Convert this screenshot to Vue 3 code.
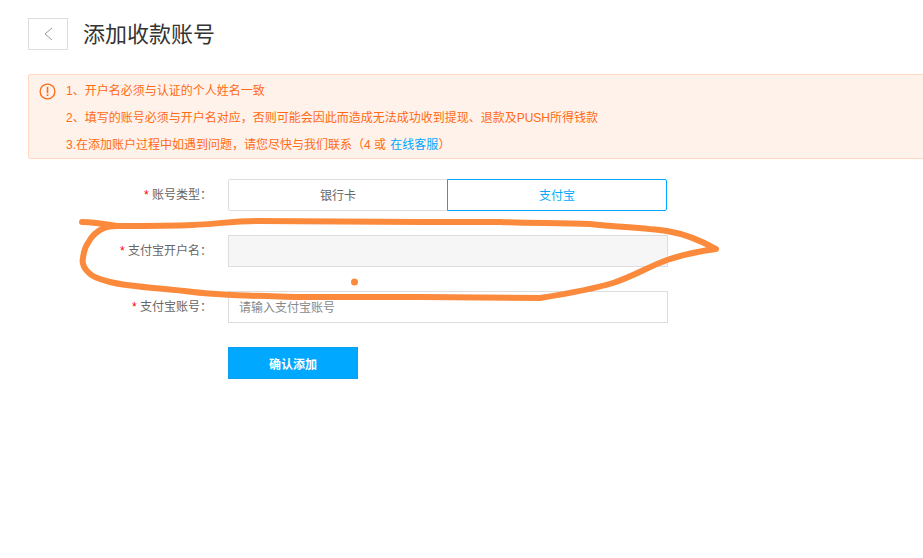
<script setup>
import { ref } from 'vue';

const accountType = ref('alipay');
const types = [
  { key: 'bank', label: '银行卡' },
  { key: 'alipay', label: '支付宝' }
];
</script>

<template>
  <div class="page">
    <header class="head">
      <button class="back">
        <svg width="12" height="14" viewBox="0 0 12 14"><path d="M10 1 L3 7 L10 13" fill="none" stroke="#999" stroke-width="1" /></svg>
      </button>
      <h1 class="title">添加收款账号</h1>
    </header>

    <div class="notice">
      <svg class="notice-icon" width="17" height="17" viewBox="0 0 17 17">
        <circle cx="8.5" cy="8.5" r="7.4" fill="none" stroke="#ff6a13" stroke-width="1.3" />
        <rect x="7.7" y="3.8" width="1.6" height="6.4" fill="#ff6a13" />
        <rect x="7.7" y="11.3" width="1.6" height="1.7" fill="#ff6a13" />
      </svg>
      <div class="notice-text">
        <p>1、开户名必须与认证的个人姓名一致</p>
        <p>2、填写的账号必须与开户名对应，否则可能会因此而造成无法成功收到提现、退款及PUSH所得钱款</p>
        <p>3.在添加账户过程中如遇到问题，请您尽快与我们联系（4 或 <a class="link">在线客服</a>）</p>
      </div>
    </div>

    <form class="form" @submit.prevent>
      <div class="row">
        <label class="label"><i>*</i> 账号类型：</label>
        <div class="tabs">
          <button
            v-for="t in types"
            :key="t.key"
            type="button"
            class="tab"
            :class="{ active: accountType === t.key }"
            @click="accountType = t.key"
          >{{ t.label }}</button>
        </div>
      </div>
      <div class="row">
        <label class="label"><i>*</i> 支付宝开户名：</label>
        <input class="input" disabled />
      </div>
      <div class="row">
        <label class="label"><i>*</i> 支付宝账号：</label>
        <input class="input" placeholder="请输入支付宝账号" />
      </div>
      <div class="row submit-row">
        <span class="label"></span>
        <button type="button" class="submit">确认添加</button>
      </div>
    </form>

    <!-- hand drawn mark on top of the page -->
    <svg class="scribble" width="923" height="558" viewBox="0 0 923 558">
      <path
        d="M82 222 C92 222 105 224 117 226 C145 226 170 226 193 225 C215 224 235 221 257 221 L420 222 L500 222 C530 223 560 223 590 224 C620 227 645 228 667 231 C685 234 700 240 716 249 C700 251 685 254 667 260 C650 266 632 277 613 283 C590 290 565 294 540 298 L420 297 L300 297 C262 296 228 296 193 292 C160 288 130 287 110 282 C98 279 91 276 88 272 C83 267 82 262 83 258 C84 250 85 247 88 243 C92 235 97 231 104 228 C108 226 112 226 117 226"
        fill="none"
        stroke="#fb8a3c"
        stroke-width="6"
        stroke-linecap="round"
        stroke-linejoin="round"
      />
      <circle cx="354.500" cy="282" r="3.500" fill="#fb8a3c" />
    </svg>
  </div>
</template>

<style scoped>
.page {
  position: relative;
  width: 923px;
  height: 558px;
  overflow: hidden;
  background: #fff;
  font-family: "Liberation Sans", "Noto Sans CJK SC", sans-serif;
  font-size: 12px;
  color: #666;
  box-sizing: border-box;
  padding: 18px 0 0 28px;
}

.head {
  display: flex;
  align-items: center;
  gap: 15px;
  height: 32px;
}

.back {
  width: 40px;
  height: 32px;
  padding: 0;
  border: 1px solid #ddd;
  background: #fff;
  display: flex;
  align-items: center;
  justify-content: center;
  box-sizing: border-box;
}

.title {
  margin: 0 0 4px;
  font-size: 22px;
  font-weight: 400;
  color: #333;
}

.notice {
  margin-top: 24px;
  width: 920px;
  height: 85px;
  box-sizing: border-box;
  border: 1px solid #ffd8c2;
  border-radius: 2px;
  background: #fff2eb;
  display: flex;
  padding: 7px 0 0 10px;
  color: #ff6a13;
}

.notice-icon {
  margin-top: 1px;
  flex: none;
}

.notice-text {
  margin-left: 10px;
}

.notice-text p {
  margin: 0;
  height: 27px;
  line-height: 19px;
}

.link {
  color: #00a8ff;
  margin-left: 1px;
}

.form {
  margin-top: 20px;
  display: flex;
  flex-direction: column;
  gap: 24px;
}

.row {
  display: flex;
  height: 32px;
}

.label {
  width: 184px;
  flex: none;
  margin-right: 16px;
  text-align: right;
  line-height: 32px;
}

.label i {
  color: #f00;
  font-style: normal;
}

.tabs {
  display: flex;
  width: 439px;
}

.tab {
  flex: 1;
  height: 32px;
  background: #fff;
  border: 1px solid #ddd;
  font: inherit;
  color: #666;
  padding: 0 0 1px;
  border-radius: 2px 0 0 2px;
  box-sizing: border-box;
}

.tab.active {
  margin-left: -1px;
  border-color: #00a8ff;
  color: #00a8ff;
  border-radius: 0 2px 2px 0;
  position: relative;
}

.input {
  width: 440px;
  height: 32px;
  box-sizing: border-box;
  border: 1px solid #ddd;
  padding: 1px 10px 0;
  font: inherit;
  background: #fff;
  outline: none;
}

.input:disabled {
  background: #f6f6f6;
}

.input::placeholder {
  color: #888;
}

.submit {
  width: 130px;
  height: 32px;
  border: 1px solid #0aa0ee;
  background: #00a8ff;
  color: #fff;
  font: inherit;
  font-weight: 700;
  padding: 0;
  box-sizing: border-box;
}

.scribble {
  position: absolute;
  left: 0;
  top: 0;
  pointer-events: none;
}
</style>

<style>
html, body {
  margin: 0;
  background: #fff;
}
</style>
